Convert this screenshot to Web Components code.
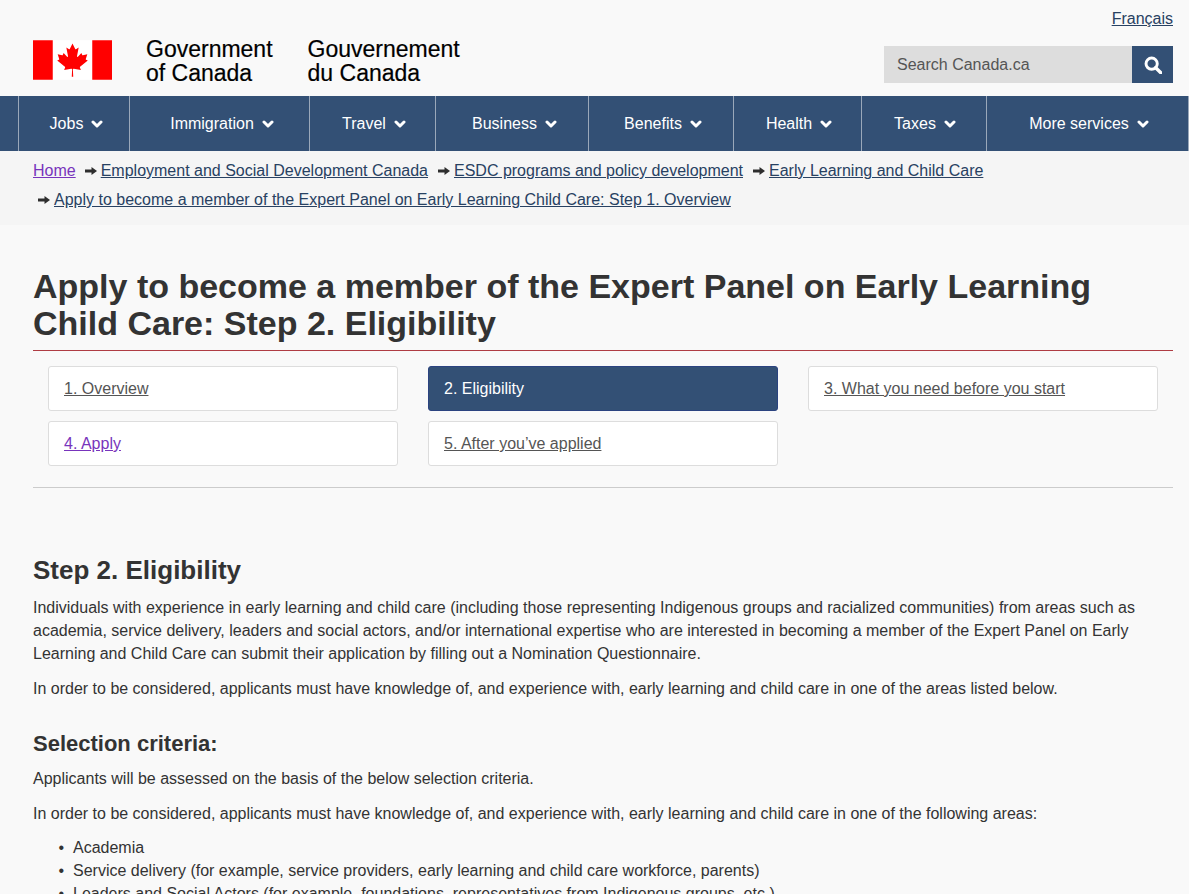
<!DOCTYPE html>
<html lang="en">
<head>
<meta charset="utf-8">
<title>Apply to become a member of the Expert Panel on Early Learning Child Care: Step 2. Eligibility</title>
<style>
html, body { margin: 0; height: 894px; overflow: hidden; }
body { background: #f9f9f9; color: #333; font: 16px/23px "Liberation Sans", Arial, sans-serif; }
li { list-style-type: "•\00a0\00a0"; }
</style>
</head>
<body>
<gc-header></gc-header>
<gc-nav>
    <gc-nav-item style="width:111px;padding-left:5px">Jobs</gc-nav-item>
    <gc-nav-item style="width:180px;padding-left:5px">Immigration</gc-nav-item>
    <gc-nav-item style="width:126px;padding-left:3px">Travel</gc-nav-item>
    <gc-nav-item style="width:153px;padding-left:5px">Business</gc-nav-item>
    <gc-nav-item style="width:145px;padding-left:4px">Benefits</gc-nav-item>
    <gc-nav-item style="width:128px;padding-left:3px">Health</gc-nav-item>
    <gc-nav-item style="width:125px;padding-left:2px">Taxes</gc-nav-item>
    <gc-nav-item style="width:203px;padding-left:3px">More services</gc-nav-item>
</gc-nav>
<gc-breadcrumb>
    <gc-crumb first visited style="margin-right:-1px">Home</gc-crumb>
    <gc-crumb>Employment and Social Development Canada</gc-crumb>
    <gc-crumb>ESDC programs and policy development</gc-crumb>
    <gc-crumb>Early Learning and Child Care</gc-crumb>
    <gc-crumb>Apply to become a member of the Expert Panel on Early Learning Child Care: Step 1. Overview</gc-crumb>
</gc-breadcrumb>
<gc-page>
    <span slot="title">Apply to become a member of the Expert Panel on Early Learning Child Care: Step 2. Eligibility</span>
    <gc-steps slot="steps">
        <gc-step>1. Overview</gc-step>
        <gc-step active>2. Eligibility</gc-step>
        <gc-step>3. What you need before you start</gc-step>
        <gc-step visited>4. Apply</gc-step>
        <gc-step>5. After you’ve applied</gc-step>
    </gc-steps>
    <gc-section heading="Step 2. Eligibility" level="2">
        <p>Individuals with experience in early learning and child care (including those representing Indigenous groups and racialized communities) from areas such as academia, service delivery, leaders and social actors, and/or international expertise who are interested in becoming a member of the Expert Panel on Early Learning and Child Care can submit their application by filling out a Nomination Questionnaire.</p>
        <p>In order to be considered, applicants must have knowledge of, and experience with, early learning and child care in one of the areas listed below.</p>
    </gc-section>
    <gc-section heading="Selection criteria:" level="3">
        <p>Applicants will be assessed on the basis of the below selection criteria.</p>
        <p>In order to be considered, applicants must have knowledge of, and experience with, early learning and child care in one of the following areas:</p>
        <ul>
            <li>Academia</li>
            <li>Service delivery (for example, service providers, early learning and child care workforce, parents)</li>
            <li>Leaders and Social Actors (for example, foundations, representatives from Indigenous groups, etc.)</li>
        </ul>
    </gc-section>
</gc-page>

<script>
const LEAF = "M4890 4430l-45-863a95 95 0 0 1 111-98l859 151-116-320a65 65 0 0 1 20-73l941-762-212-99a65 65 0 0 1-34-79l186-572-542 115a65 65 0 0 1-73-38l-105-247-423 454a65 65 0 0 1-111-57l204-1052-327 189a65 65 0 0 1-91-27l-332-652-332 652a65 65 0 0 1-91 27l-327-189 204 1052a65 65 0 0 1-111 57l-423-454-105 247a65 65 0 0 1-73 38l-542-115 186 572a65 65 0 0 1-34 79l-212 99 941 762a65 65 0 0 1 20 73l-116 320 859-151a95 95 0 0 1 111 98l-45 863z";

class ShadowBase extends HTMLElement {
    constructor() {
        super();
        this.attachShadow({ mode: 'open' }).innerHTML = this.markup();
    }
}

class GcHeader extends ShadowBase {
    markup() {
        return `
        <style>
        :host { display: flex; justify-content: space-between; height: 96px; padding: 0 16px 0 33px; }
        .brand { display: flex; margin-top: 40px; height: 40px; }
        svg { width: 79px; height: 40px; margin-right: 34px; }
        .sig { color: #000; font-size: 23px; line-height: 24px; margin-top: -3px; margin-right: 35px; white-space: nowrap; -webkit-text-stroke: .2px #000; }
        .tools { display: flex; flex-direction: column; align-items: flex-end; }
        a { color: #284162; margin-top: 7px; }
        form { display: flex; margin-top: 16px; height: 37px; }
        .box { width: 248px; background: #ddd; color: #555; line-height: 37px; padding-left: 13px; box-sizing: border-box; }
        button { width: 41px; border: 0; padding: 0; background: #335075; display: flex; align-items: center; justify-content: center; }
        </style>
        <div class="brand">
            <svg viewBox="0 0 9600 4800" aria-hidden="true">
                <rect width="9600" height="4800" fill="#fff"/>
                <rect width="2400" height="4800" fill="#f00"/>
                <rect x="7200" width="2400" height="4800" fill="#f00"/>
                <path fill="#f00" d="${LEAF}"/>
            </svg>
            <div class="sig">Government<br>of Canada</div>
            <div class="sig">Gouvernement<br>du Canada</div>
        </div>
        <div class="tools">
            <a href="#">Français</a>
            <form>
                <div class="box">Search Canada.ca</div>
                <button type="button" aria-label="Search">
                    <svg viewBox="0 0 16 16" style="width:18px;height:18px;margin:0">
                        <circle cx="6.8" cy="6.8" r="5" fill="none" stroke="#fff" stroke-width="2.6"/>
                        <path d="M10.4 10.4L15 15" stroke="#fff" stroke-width="3" stroke-linecap="round"/>
                    </svg>
                </button>
            </form>
        </div>`;
    }
}

class GcNav extends ShadowBase {
    markup() {
        return `
        <style>
        :host { display: flex; height: 55px; background: #335075; padding-left: 18px; }
        </style>
        <slot></slot>`;
    }
}

class GcNavItem extends ShadowBase {
    markup() {
        return `
        <style>
        :host { display: flex; align-items: center; justify-content: center; gap: 8px; box-sizing: border-box; border-left: 1px solid #9aa8ba; color: #fff; }
        :host(:last-child) { border-right: 1px solid #9aa8ba; }
        svg { width: 12px; height: 9px; margin-top: 2px; }
        </style>
        <slot></slot>
        <svg viewBox="0 0 12 9"><path d="M2 2l4 4 4-4" fill="none" stroke="#fff" stroke-width="3" stroke-linecap="round" stroke-linejoin="round"/></svg>`;
    }
}

class GcBreadcrumb extends ShadowBase {
    markup() {
        return `
        <style>
        :host { display: flex; flex-wrap: wrap; column-gap: 5px; row-gap: 6px; align-content: flex-start; height: 74px; box-sizing: border-box; padding: 8px 16px 0 33px; background: #f5f5f5; }
        </style>
        <slot></slot>`;
    }
}

class GcCrumb extends ShadowBase {
    markup() {
        const first = this.hasAttribute('first');
        const color = this.hasAttribute('visited') ? '#7834bc' : '#284162';
        return `
        <style>
        :host { display: flex; align-items: center; ${first ? '' : 'padding-left: 5px;'} }
        svg { width: 12px; height: 10px; margin-right: 4px; }
        a { color: ${color}; white-space: nowrap; }
        </style>
        ${first ? '' : '<svg viewBox="0 0 12 10"><path d="M0 3.6h6.5V1L12 5 6.5 9V6.4H0z" fill="#2e2e2e"/></svg>'}
        <a href="#"><slot></slot></a>`;
    }
}

class GcPage extends ShadowBase {
    markup() {
        return `
        <style>
        :host { display: block; padding: 0 16px 0 33px; }
        h1 { margin: 43px 0 0; padding-bottom: 8px; border-bottom: 1px solid #af3c43; font-size: 34px; line-height: 37px; color: #333; }
        hr { margin: 21px 0 0; border: 0; border-top: 1px solid #ccc; }
        .steps { display: block; padding: 15px 15px 0; }
        </style>
        <h1><slot name="title"></slot></h1>
        <div class="steps"><slot name="steps"></slot></div>
        <hr>
        <slot></slot>`;
    }
}

class GcSteps extends ShadowBase {
    markup() {
        return `
        <style>
        :host { display: grid; grid-template-columns: repeat(3, 350px); column-gap: 30px; row-gap: 10px; }
        </style>
        <slot></slot>`;
    }
}

class GcStep extends ShadowBase {
    markup() {
        const active = this.hasAttribute('active');
        const color = active ? '#fff' : this.hasAttribute('visited') ? '#7834bc' : '#555';
        return `
        <style>
        :host { display: flex; align-items: center; height: 45px; box-sizing: border-box; padding-left: 15px; border-radius: 3px;
            border: 1px solid ${active ? '#2b4380' : '#ddd'}; background: ${active ? '#335075' : '#fff'}; }
        a { color: ${color}; text-decoration: ${active ? 'none' : 'underline'}; }
        </style>
        <a href="#"><slot></slot></a>`;
    }
}

class GcSection extends ShadowBase {
    markup() {
        const level = this.getAttribute('level');
        const isH2 = level === '2';
        return `
        <style>
        :host { display: block; }
        h${level} { margin: ${isH2 ? '67px 0 10px' : '31px 0 10px'}; font-size: ${isH2 ? '26px' : '22px'}; line-height: ${isH2 ? '31px' : '26px'}; color: #333; }
        ::slotted(p) { margin: 0 0 12px; }
        ::slotted(ul) { margin: -1px 0 0; padding-left: 40px; }
        </style>
        <h${level}>${this.getAttribute('heading')}</h${level}>
        <slot></slot>`;
    }
}

customElements.define('gc-header', GcHeader);
customElements.define('gc-nav', GcNav);
customElements.define('gc-nav-item', GcNavItem);
customElements.define('gc-breadcrumb', GcBreadcrumb);
customElements.define('gc-crumb', GcCrumb);
customElements.define('gc-page', GcPage);
customElements.define('gc-steps', GcSteps);
customElements.define('gc-step', GcStep);
customElements.define('gc-section', GcSection);
</script>
</body>
</html>
